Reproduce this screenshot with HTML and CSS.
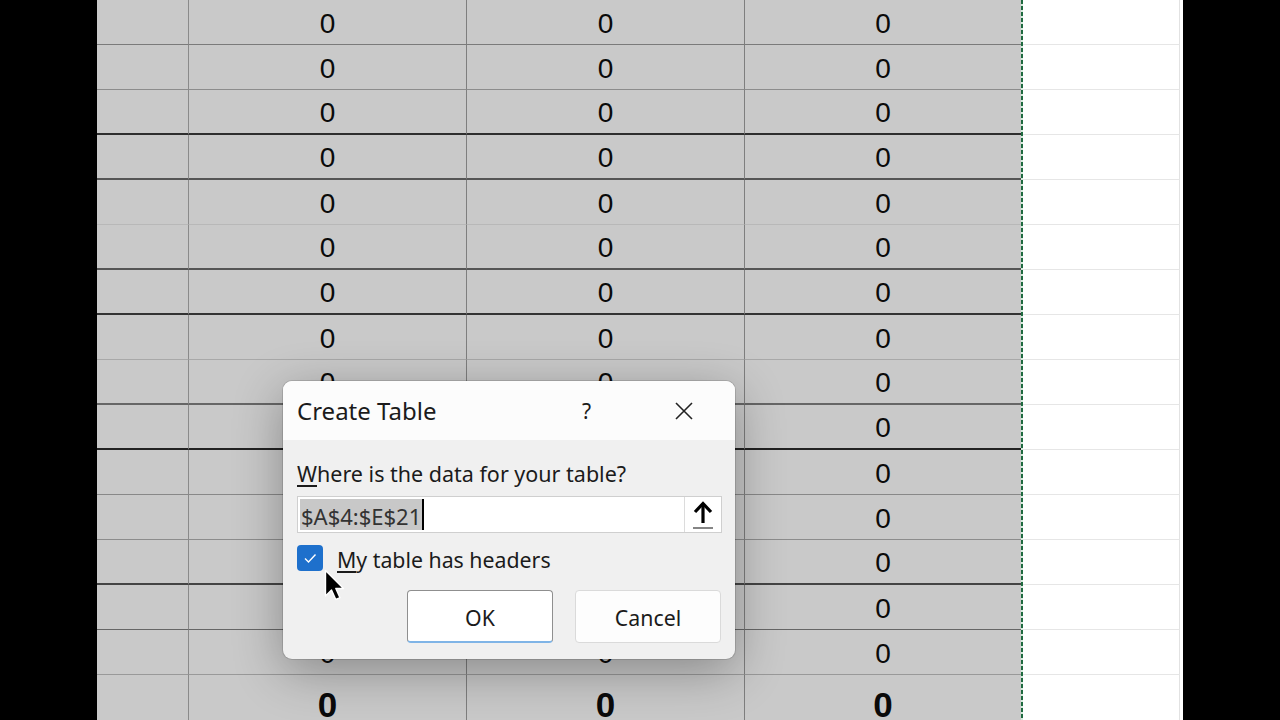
FILE: index.html
```html
<!DOCTYPE html>
<html>
<head>
<meta charset="utf-8">
<link rel="stylesheet" href="styles.css">
</head>
<body>
<div class="screen">
  <div class="bar"></div>
  <div class="sheet">
    <div class="row r0"><div class="c ca"></div><div class="c cn">0</div><div class="c cn">0</div><div class="c cn cd">0</div><div class="ants"></div><div class="c cw"></div></div>
    <div class="row r1"><div class="c ca"></div><div class="c cn">0</div><div class="c cn">0</div><div class="c cn cd">0</div><div class="ants"></div><div class="c cw"></div></div>
    <div class="row r2"><div class="c ca"></div><div class="c cn">0</div><div class="c cn">0</div><div class="c cn cd">0</div><div class="ants"></div><div class="c cw"></div></div>
    <div class="row r3"><div class="c ca"></div><div class="c cn">0</div><div class="c cn">0</div><div class="c cn cd">0</div><div class="ants"></div><div class="c cw"></div></div>
    <div class="row r4"><div class="c ca"></div><div class="c cn">0</div><div class="c cn">0</div><div class="c cn cd">0</div><div class="ants"></div><div class="c cw"></div></div>
    <div class="row r5"><div class="c ca"></div><div class="c cn">0</div><div class="c cn">0</div><div class="c cn cd">0</div><div class="ants"></div><div class="c cw"></div></div>
    <div class="row r6"><div class="c ca"></div><div class="c cn">0</div><div class="c cn">0</div><div class="c cn cd">0</div><div class="ants"></div><div class="c cw"></div></div>
    <div class="row r7"><div class="c ca"></div><div class="c cn">0</div><div class="c cn">0</div><div class="c cn cd">0</div><div class="ants"></div><div class="c cw"></div></div>
    <div class="row r8"><div class="c ca"></div><div class="c cn">0</div><div class="c cn">0</div><div class="c cn cd">0</div><div class="ants"></div><div class="c cw"></div></div>
    <div class="row r9"><div class="c ca"></div><div class="c cn">0</div><div class="c cn">0</div><div class="c cn cd">0</div><div class="ants"></div><div class="c cw"></div></div>
    <div class="row r10"><div class="c ca"></div><div class="c cn">0</div><div class="c cn">0</div><div class="c cn cd">0</div><div class="ants"></div><div class="c cw"></div></div>
    <div class="row r11"><div class="c ca"></div><div class="c cn">0</div><div class="c cn">0</div><div class="c cn cd">0</div><div class="ants"></div><div class="c cw"></div></div>
    <div class="row r12"><div class="c ca"></div><div class="c cn">0</div><div class="c cn">0</div><div class="c cn cd">0</div><div class="ants"></div><div class="c cw"></div></div>
    <div class="row r13"><div class="c ca"></div><div class="c cn">0</div><div class="c cn">0</div><div class="c cn cd">0</div><div class="ants"></div><div class="c cw"></div></div>
    <div class="row r14"><div class="c ca"></div><div class="c cn">0</div><div class="c cn">0</div><div class="c cn cd">0</div><div class="ants"></div><div class="c cw"></div></div>
    <div class="row r15 total"><div class="c ca"></div><div class="c cn">0</div><div class="c cn">0</div><div class="c cn cd">0</div><div class="ants"></div><div class="c cw"></div></div>
  </div>
  <div class="bar"></div>

  <div class="dialog">
    <div class="dlg-head">
      <span class="dlg-title">Create Table</span>
      <span class="dlg-help">?</span>
      <svg class="dlg-close" width="20" height="20" viewBox="0 0 20 20"><path d="M2 2 L18 18 M18 2 L2 18" stroke="#222" stroke-width="1.6" fill="none"/></svg>
    </div>
    <div class="dlg-body">
      <div class="dlg-label"><u>W</u>here is the data for your table?</div>
      <div class="range">
        <div class="range-text"><span class="sel">$A$4:$E$21</span><span class="caret"></span></div>
        <div class="range-btn">
          <svg width="26" height="30" viewBox="0 0 26 30"><path d="M13 4 L13 23" stroke="#000" stroke-width="3.2" fill="none"/><path d="M5 12 L13 3.5 L21 12" stroke="#000" stroke-width="3.2" fill="none" stroke-linejoin="miter"/><path d="M3 28 L23 28" stroke="#666" stroke-width="1.6"/></svg>
        </div>
      </div>
      <div class="check-row">
        <span class="checkbox"><svg width="26" height="26" viewBox="0 0 26 26"><path d="M8 13.5 L11.5 17 L18.5 9.5" stroke="#fff" stroke-width="1.4" fill="none"/></svg></span>
        <span class="check-label"><u>M</u>y table has headers</span>
      </div>
      <div class="buttons">
        <div class="btn btn-ok">OK</div>
        <div class="btn">Cancel</div>
      </div>
    </div>
  </div>

  <svg class="cursor" width="24" height="36" viewBox="0 0 24 36"><path d="M1.5 1.5 L1.5 27 L7.5 21 L11.8 30.5 L16 28.7 L11.8 19.5 L19.5 19.5 Z" fill="#000" stroke="#fff" stroke-width="1.4" stroke-linejoin="round"/></svg>
</div>
</body>
</html>
```

FILE: styles.css
```css
html, body {
  margin: 0;
  padding: 0;
  background: #000;
  overflow: hidden;
}
.screen {
  position: relative;
  width: 1280px;
  height: 720px;
  display: flex;
  overflow: hidden;
}
.bar {
  width: 97px;
  flex: none;
  background: #000;
}
.sheet {
  width: 1086px;
  flex: none;
  background: #fff;
  display: flex;
  flex-direction: column;
}
.row {
  display: flex;
  height: 45px;
  flex: none;
  background: #fff;
}
.row.total {
  height: 60px;
}
.c {
  box-sizing: border-box;
  height: 100%;
  border-bottom: 1px solid #888;
  background: #c9c9c9;
  display: flex;
  align-items: center;
  justify-content: center;
  padding-top: 3px;
  font-family: "Liberation Sans", Arial, sans-serif;
  font-size: 28px;
  color: #0a0a0a;
}
.ca {
  width: 92px;
  border-right: 1px solid #8a8a8a;
}
.cn {
  width: 278px;
  border-right: 1px solid #7e7e7e;
}
.cn.cd {
  width: 276px;
  border-right: none;
}
.ants {
  width: 2px;
  flex: none;
  background: repeating-linear-gradient(to bottom, #1f6a40 0 4px, #d6ebdd 4px 6px);
  background-attachment: fixed;
}
.c.cw {
  width: 157px;
  background: #fff;
  border-right: 1px solid #e2e2e2;
  border-bottom: 1px solid #e6e6e6 !important;
  border-bottom-width: 1px !important;
}
.r0 .c { border-bottom-color: #7a7a7a; }
.r1 .c { border-bottom-color: #8c8c8c; }
.r2 .c { border-bottom: 2px solid #2e2e2e; }
.r3 .c { border-bottom: 2px solid #555; }
.r4 .c { border-bottom-color: #b8b8b8; }
.r5 .c { border-bottom: 2px solid #555; }
.r6 .c { border-bottom: 2px solid #333; }
.r7 .c { border-bottom-color: #a8a8a8; }
.r8 .c { border-bottom: 2px solid #666; }
.r9 .c { border-bottom: 2px solid #222; }
.r10 .c { border-bottom-color: #888; }
.r11 .c { border-bottom-color: #8c8c8c; }
.r12 .c { border-bottom: 2px solid #444; }
.r13 .c { border-bottom-color: #666; }
.r14 .c { border-bottom-color: #999; }
.total .c { border-bottom: none; font-weight: bold; font-size: 35px; padding-top: 0; }

/* dialog */
.dialog {
  position: absolute;
  left: 283px;
  top: 381px;
  width: 452px;
  height: 278px;
  border-radius: 9px;
  background: #f0f0f0;
  overflow: hidden;
  box-shadow: 0 12px 50px rgba(0,0,0,0.32), 0 0 0 1px rgba(0,0,0,0.12);
  font-family: "Noto Sans", "Open Sans", sans-serif;
  color: #1b1b1b;
}
.dlg-head {
  height: 59px;
  background: #fcfcfc;
  display: flex;
  align-items: center;
  padding: 0 14px;
}
.dlg-title {
  font-size: 24px;
  flex: 1;
}
.dlg-help {
  font-size: 21px;
  margin-right: 83px;
}
.dlg-close {
  margin-right: 27px;
}
.dlg-body {
  padding: 0 14px;
  display: flex;
  flex-direction: column;
}
.dlg-label {
  font-size: 21.5px;
  margin-top: 18px;
  height: 38px;
  line-height: 32px;
}
u {
  text-decoration-thickness: 1.5px;
  text-underline-offset: 3px;
}
.range {
  box-sizing: border-box;
  height: 37px;
  width: 425px;
  background: #fff;
  border: 1px solid #cfcfcf;
  display: flex;
}
.range-text {
  flex: 1;
  display: flex;
  align-items: center;
  padding-left: 2px;
}
.sel {
  background: #c8c8c8;
  color: #333;
  font-size: 22px;
  line-height: 31px;
  padding: 2px 1px 0 1px;
  height: 31px;
  box-sizing: border-box;
}
.caret {
  width: 2px;
  height: 31px;
  background: #000;
}
.range-btn {
  width: 36px;
  border-left: 1px solid #dcdcdc;
  display: flex;
  align-items: center;
  justify-content: center;
}
.check-row {
  display: flex;
  align-items: center;
  margin-top: 12px;
  height: 26px;
}
.checkbox {
  width: 26px;
  height: 26px;
  border-radius: 4px;
  background: #1e70cc;
  display: block;
}
.checkbox svg { display: block; }
.check-label {
  font-size: 21.3px;
  margin-left: 14px;
  line-height: 26px;
  padding-top: 4px;
}
.buttons {
  display: flex;
  justify-content: flex-end;
  gap: 22px;
  margin-top: 19px;
}
.btn {
  box-sizing: border-box;
  width: 146px;
  height: 53px;
  background: #fdfdfd;
  border: 1px solid #dadada;
  border-radius: 4px;
  display: flex;
  align-items: center;
  justify-content: center;
  font-size: 21.3px;
  padding-top: 2px;
}
.btn-ok {
  background: #fff;
  border: 1px solid #8f8f8f;
  border-bottom: 2px solid #7fb4e6;
}
.cursor {
  position: absolute;
  left: 324px;
  top: 569px;
}
```
